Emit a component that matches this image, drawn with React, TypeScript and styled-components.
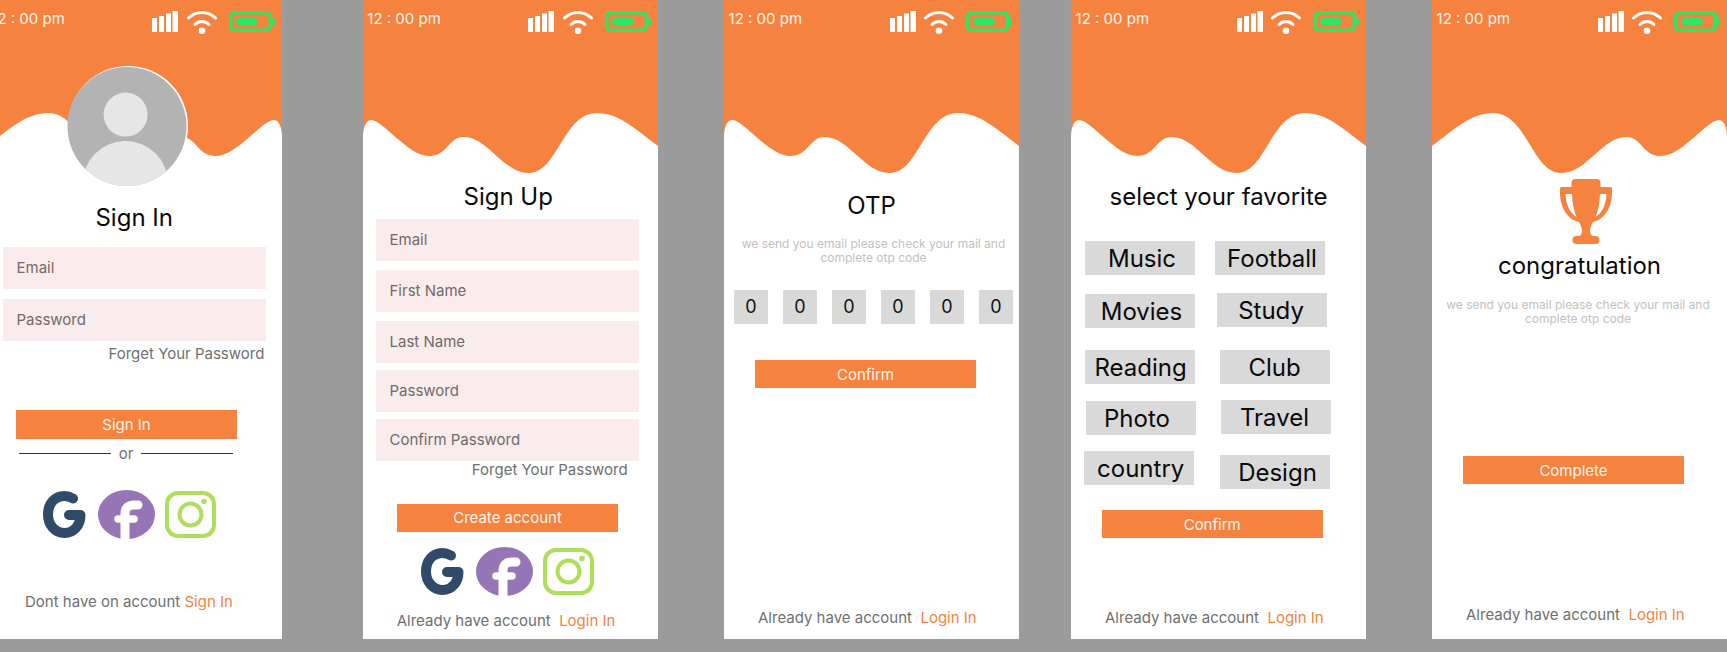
import { ReactNode } from 'react';
import styled, { createGlobalStyle } from 'styled-components';

const ORANGE = '#f5833f';

const GlobalStyle = createGlobalStyle`
  html, body {
    margin: 0;
    padding: 0;
    background: #9b9b9b;
    font-family: Inter, "Liberation Sans", sans-serif;
  }
`

const favorites = [
  { top: 0, items: [
    { label: 'Music', x: 14, y: 0, shift: 4 },
    { label: 'Football', x: 20, y: 0, shift: 4 },
  ] },
  { top: 18, items: [
    { label: 'Movies', x: 14, y: 1, shift: 3 },
    { label: 'Study', x: 22, y: 0, shift: -2 },
  ] },
  { top: 22.4, items: [
    { label: 'Reading', x: 14, y: 0, shift: 1 },
    { label: 'Club', x: 25, y: 0, shift: -1 },
  ] },
  { top: 16, items: [
    { label: 'Photo', x: 15, y: 1, shift: -8 },
    { label: 'Travel', x: 25, y: 0, shift: -3 },
  ] },
  { top: 16, items: [
    { label: 'country', x: 12.7, y: 0, shift: 4 },
    { label: 'Design', x: 26.3, y: 3.5, shift: 5 },
  ] },
]

const otpDigits = ['0', '0', '0', '0', '0', '0']

function Wave({ flip }: { flip?: boolean }) {
  return (
    <WaveSvg $flip={flip} viewBox="0 0 295 173">
      <path
        fill={ORANGE}
        d="M0 0H295V146C270 127 255 113 234 113C200 113 195 173 165.7 173C140 173 125 137 100.7 137C85 137 85 156 66 156C45 156 20 120 8 120C2 120 0 130 0 137Z"
      />
    </WaveSvg>
  )
}

function StatusBar() {
  return (
    <StatusRow>
      <Time>12 : 00 pm</Time>
      <SignalIcon viewBox="0 0 26 21" width="26" height="21">
        <g fill="#fff">
          <rect x="0" y="7" width="5" height="14" />
          <rect x="7" y="5" width="5" height="16" />
          <rect x="14" y="2.5" width="5" height="18.5" />
          <rect x="20.5" y="0" width="5.5" height="21" />
        </g>
      </SignalIcon>
      <svg viewBox="0 0 30 25" width="30" height="25">
        <g fill="none" stroke="#fff" strokeWidth="3" strokeLinecap="round">
          <path d="M1.5 9C9 1.5 21 1.5 28.5 9" />
          <path d="M8 15.5C12 11.5 18 11.5 22 15.5" />
        </g>
        <circle cx="15" cy="21.7" r="3.3" fill="#fff" />
      </svg>
      <svg viewBox="0 0 46 21" width="46" height="21">
        <rect x="1.8" y="1.8" width="39.6" height="17.4" rx="4" fill="none" stroke="#2ee564" strokeWidth="3.6" />
        <rect x="43" y="7" width="3" height="7" rx="1.5" fill="#2ee564" />
        <rect x="7" y="7" width="22" height="7" rx="3.5" fill="#2ee564" />
      </svg>
    </StatusRow>
  )
}

function Avatar() {
  return (
    <AvatarSvg viewBox="0 0 122 122" width="122" height="122">
      <defs>
        <clipPath id="avatar-clip">
          <circle cx="60" cy="60.5" r="59.5" />
        </clipPath>
      </defs>
      <circle cx="61" cy="60" r="60" fill="#fff" />
      <circle cx="60" cy="60.5" r="59.5" fill="#b3b3b3" />
      <g clipPath="url(#avatar-clip)" fill="#e6e6e6">
        <circle cx="58.6" cy="48.6" r="22" />
        <circle cx="58.5" cy="117.8" r="42.8" />
      </g>
    </AvatarSvg>
  )
}

function Socials({ x, top }: { x: number; top: number }) {
  return (
    <SocialRow $x={x} $top={top}>
      <svg viewBox="0 0 43 47" width="43" height="47">
        <path
          d="M30 7.5C27 5.8 24.5 5 21.5 5C11.5 5 5 13 5 23.5C5 34 12 42 21.5 42C31 42 37.5 34 37.5 24L26 24"
          fill="none"
          stroke="#2f4b69"
          strokeWidth="10"
          strokeLinecap="round"
          strokeLinejoin="round"
        />
      </svg>
      <FacebookIcon viewBox="0 0 57 49" width="57" height="49">
        <ellipse cx="28.5" cy="24.5" rx="28.5" ry="24.5" fill="#9575b5" />
        <g fill="none" stroke="#fff" strokeLinecap="round">
          <path d="M40 15H36C30 15 27 18 27 24V60" strokeWidth="9" />
          <path d="M20 29H36" strokeWidth="7.5" />
        </g>
      </FacebookIcon>
      <svg viewBox="0 0 51 47" width="51" height="47">
        <rect x="2" y="2" width="47" height="43" rx="11" fill="none" stroke="#aede5c" strokeWidth="4" />
        <circle cx="25.5" cy="23.5" r="11" fill="none" stroke="#aede5c" strokeWidth="4" />
        <circle cx="39" cy="10.5" r="2.8" fill="#aede5c" />
      </svg>
    </SocialRow>
  )
}

function Trophy() {
  return (
    <TrophyIcon viewBox="0 0 52 65" width="52" height="65">
      <path
        fill={ORANGE}
        fillRule="evenodd"
        d="M1.5 8H11.5V4A4 4 0 0 1 15.5 0H36.5A4 4 0 0 1 40.5 4V8H50.5A1.5 1.5 0 0 1 52 9.5V14C52 30 43 41 33 43C31 47 29.5 50 30 53C30.5 55.5 32 57 33.5 57H35.5A4 4 0 0 1 35.5 65H16.5A4 4 0 0 1 16.5 57H18.5C20 57 21.5 55.5 22 53C22.5 50 21 47 19 43C9 41 0 30 0 14V9.5A1.5 1.5 0 0 1 1.5 8ZM5.5 15C6 26 10 34 16.5 38C14 32 12.3 24 12 15ZM46.5 15H40C39.7 24 38 32 35.5 38C42 34 46 26 46.5 15Z"
      />
    </TrophyIcon>
  )
}

function AccountNote({ text, link, x = 34, bottom }: { text: ReactNode; link: string; x?: number; bottom: number }) {
  return (
    <Note $x={x} $bottom={bottom}>
      {text}
      <NoteLink>{link}</NoteLink>
    </Note>
  )
}

function SignInScreen() {
  return (
    <Screen $offset={-13.3}>
      <Wave flip />
      <StatusBar />
      <Avatar />
      <Title $top={30}>Sign In</Title>
      <Field $x={16.3} $top={15}>Email</Field>
      <Field $x={16.3} $top={9.5}>Password</Field>
      <Forgot $right={17.4} $top={4}>Forget Your Password</Forgot>
      <ActionButton $x={29.3} $top={48.5}>Sign In</ActionButton>
      <OrDivider>
        <OrLine />
        or
        <OrLine />
      </OrDivider>
      <Socials x={56.3} top={28.5} />
      <AccountNote x={38.3} bottom={29} text="Dont have on account " link="Sign In" />
    </Screen>
  )
}

function SignUpScreen() {
  return (
    <Screen $offset={81}>
      <Wave />
      <StatusBar />
      <Title $top={9} $nudge={4}>Sign Up</Title>
      <Field $x={13.3} $top={8}>Email</Field>
      <Field $x={13.3} $top={9}>First Name</Field>
      <Field $x={13.3} $top={9}>Last Name</Field>
      <Field $x={13.3} $top={7}>Password</Field>
      <Field $x={13.3} $top={7}>Confirm Password</Field>
      <Forgot $right={30} $top={0}>Forget Your Password</Forgot>
      <ActionButton $x={34.3} $top={25.5}>Create account</ActionButton>
      <Socials x={58.3} top={14.5} />
      <AccountNote bottom={10.5} text={'Already have account\u00a0\u00a0'} link="Login In" />
    </Screen>
  )
}

function OtpScreen() {
  return (
    <Screen $offset={66.3}>
      <Wave />
      <StatusBar />
      <Title $top={17.5}>OTP</Title>
      <Hint $top={17} $left={14}>we send you email please check your mail and complete otp code</Hint>
      <OtpRow>
        {otpDigits.map((digit, i) => (
          <OtpBox key={i}>{digit}</OtpBox>
        ))}
      </OtpRow>
      <ActionButton $x={31} $top={36}>Confirm</ActionButton>
      <AccountNote bottom={13} text={'Already have account\u00a0\u00a0'} link="Login In" />
    </Screen>
  )
}

function FavoriteScreen() {
  return (
    <Screen $offset={52}>
      <Wave />
      <StatusBar />
      <Title $top={8.5}>select your favorite</Title>
      <ChipList>
        {favorites.map((row, i) => (
          <ChipRow key={i} $top={row.top}>
            {row.items.map((chip) => (
              <Chip key={chip.label} $x={chip.x} $y={chip.y} $shift={chip.shift}>
                {chip.label}
              </Chip>
            ))}
          </ChipRow>
        ))}
      </ChipList>
      <ActionButton $x={30.7} $top={21}>Confirm</ActionButton>
      <AccountNote bottom={13} text={'Already have account\u00a0\u00a0'} link="Login In" />
    </Screen>
  )
}

function DoneScreen() {
  return (
    <Screen $offset={66}>
      <Wave flip />
      <StatusBar />
      <Trophy />
      <Title $top={6.5}>congratulation</Title>
      <Hint $top={18} $left={10.5}>we send you email please check your mail and complete otp code</Hint>
      <ActionButton $x={31} $top={129}>Complete</ActionButton>
      <AccountNote bottom={16} text={'Already have account\u00a0\u00a0'} link="Login In" />
    </Screen>
  )
}

export default function App() {
  return (
    <>
      <GlobalStyle />
      <Page>
        <SignInScreen />
        <SignUpScreen />
        <OtpScreen />
        <FavoriteScreen />
        <DoneScreen />
      </Page>
    </>
  )
}

const Page = styled.div`
  display: flex;
  align-items: flex-start;
  width: 1727px;
  height: 652px;
  overflow: hidden;
  background: #9b9b9b;
`
const Screen = styled.section<{ $offset: number }>`
  position: relative;
  flex: 0 0 295px;
  display: flex;
  flex-direction: column;
  align-items: flex-start;
  height: 639px;
  margin-left: ${(p) => p.$offset}px;
  background: #fff;
  overflow: hidden;
`
const WaveSvg = styled.svg<{ $flip?: boolean }>`
  display: block;
  flex: none;
  width: 295px;
  height: 173px;
  transform: ${(p) => (p.$flip ? 'scaleX(-1)' : 'none')};
`
const StatusRow = styled.div`
  position: absolute;
  top: 9px;
  left: 4.6px;
  right: 7px;
  height: 25px;
  display: flex;
  align-items: center;
  gap: 12px;
`
const Time = styled.span`
  margin-right: auto;
  margin-top: -6px;
  color: #fff3ea;
  font-size: 15px;
  white-space: pre;
`
const SignalIcon = styled.svg`
  margin-right: -3.6px;
`
const FacebookIcon = styled.svg`
  margin: 0 -1px 0 1px;
`
const AvatarSvg = styled.svg`
  position: absolute;
  top: 66px;
  left: 80px;
`
const Title = styled.h1<{ $top: number; $nudge?: number }>`
  align-self: stretch;
  margin: ${(p) => p.$top}px 0 0;
  padding-right: ${(p) => p.$nudge ?? 0}px;
  color: #0a0a0a;
  font-size: 24px;
  font-weight: 400;
  line-height: 29px;
  text-align: center;
`
const Field = styled.div<{ $x: number; $top: number }>`
  flex: none;
  box-sizing: border-box;
  width: 263px;
  height: 42px;
  margin: ${(p) => p.$top}px 0 0 ${(p) => p.$x}px;
  padding-left: 13.5px;
  background: #faecec;
  color: #6f6a6a;
  font-size: 15px;
  line-height: 42px;
`
const Forgot = styled.a<{ $right: number; $top: number }>`
  align-self: flex-end;
  margin: ${(p) => p.$top}px ${(p) => p.$right}px 0 0;
  color: #6f6f6f;
  font-size: 15px;
  line-height: 17px;
`
const ActionButton = styled.button<{ $x: number; $top: number }>`
  flex: none;
  width: 221px;
  height: 28.5px;
  margin: ${(p) => p.$top}px 0 0 ${(p) => p.$x}px;
  padding: 0;
  border: 0;
  background: ${ORANGE};
  color: #fff3ea;
  font-family: inherit;
  font-size: 15px;
`
const OrDivider = styled.div`
  display: flex;
  align-items: center;
  gap: 8px;
  width: 213.7px;
  margin: 6px 0 0 32.6px;
  color: #6f6f6f;
  font-size: 15px;
  line-height: 17px;
`
const OrLine = styled.span`
  flex: 1;
  height: 1px;
  background: #333;
`
const SocialRow = styled.div<{ $x: number; $top: number }>`
  flex: none;
  display: flex;
  align-items: center;
  gap: 11px;
  margin: ${(p) => p.$top}px 0 0 ${(p) => p.$x}px;
`
const Note = styled.p<{ $x: number; $bottom: number }>`
  margin: auto 0 ${(p) => p.$bottom}px ${(p) => p.$x}px;
  color: #6f6f6f;
  font-size: 15px;
  line-height: 17px;
  white-space: pre;
`
const NoteLink = styled.a`
  color: ${ORANGE};
`
const Hint = styled.p<{ $top: number; $left: number }>`
  align-self: stretch;
  margin: ${(p) => p.$top}px 0 0;
  padding: 0 ${(p) => 24 - p.$left}px 0 ${(p) => p.$left}px;
  color: #c4c0c0;
  font-size: 12px;
  line-height: 14.7px;
  text-align: center;
`
const OtpRow = styled.div`
  display: flex;
  gap: 15px;
  margin: 24px 0 0 10px;
`
const OtpBox = styled.div`
  width: 34px;
  height: 34px;
  background: #d9d9d9;
  color: #111;
  font-size: 18px;
  line-height: 34px;
  text-align: center;
`
const ChipList = styled.div`
  margin-top: 30.5px;
`
const ChipRow = styled.div<{ $top: number }>`
  display: flex;
  align-items: flex-start;
  margin-top: ${(p) => p.$top}px;
`
const Chip = styled.div<{ $x: number; $y: number; $shift: number }>`
  box-sizing: border-box;
  width: 110px;
  height: 34px;
  margin: ${(p) => p.$y}px 0 0 ${(p) => p.$x}px;
  padding-left: ${(p) => Math.max(p.$shift, 0)}px;
  padding-right: ${(p) => Math.max(-p.$shift, 0)}px;
  background: #d9d9d9;
  color: #0a0a0a;
  font-size: 24px;
  line-height: 36px;
  text-align: center;
`
const TrophyIcon = styled.svg`
  flex: none;
  margin: 6px 0 0 128px;
`
